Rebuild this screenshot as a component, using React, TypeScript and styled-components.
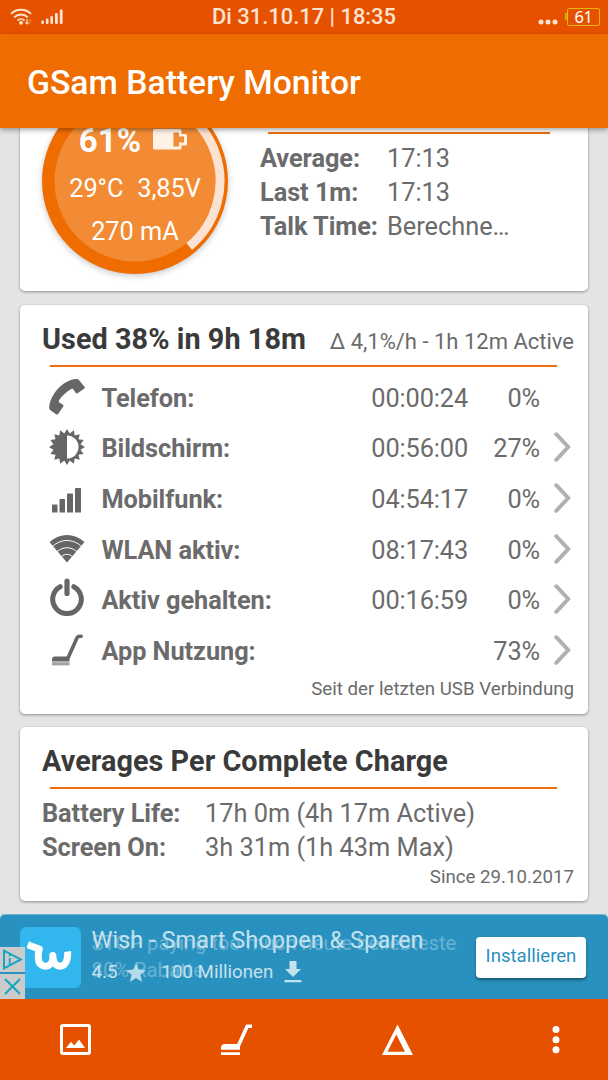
import React from "react";
import styled, { createGlobalStyle } from "styled-components";

const orange = "#ef6c00";
const deepOrange = "#e65100";
const grey = "#6b6b6b";

const GlobalStyle = createGlobalStyle`
  * { box-sizing: border-box; }
  body { margin: 0; background: #e4e4e4; font-family: Roboto, sans-serif; }
  svg { display: block; flex: none; }
`;

const Screen = styled.div`
  width: 608px;
  height: 1080px;
  display: flex;
  flex-direction: column;
  overflow: hidden;
  background: #e4e4e4;
  color: ${grey};
  white-space: nowrap;
`;

const StatusBar = styled.header`
  height: 34px;
  flex: none;
  display: grid;
  grid-template-columns: 1fr auto 1fr;
  align-items: center;
  background: ${deepOrange};
  color: #fde3d2;
  padding: 0 8px;
`;

const StatusGroup = styled.div<{ $end?: boolean }>`
  display: flex;
  align-items: center;
  justify-content: ${(p) => (p.$end ? "flex-end" : "flex-start")};
  gap: ${(p) => (p.$end ? "7px" : "9px")};
  padding-left: 2px;
  padding-bottom: 1px;
`;

const Clock = styled.div`
  font-size: 21.9px;
  font-weight: 500;
  line-height: 34px;
`;

const AppBar = styled.div`
  height: 94px;
  flex: none;
  display: flex;
  align-items: center;
  padding: 2px 27px 0;
  background: ${orange};
  color: #fff;
  font-size: 33.7px;
  font-weight: 500;
  box-shadow: 0 2px 5px rgba(0, 0, 0, 0.35);
  z-index: 1;
`;

const Content = styled.main`
  flex: 1;
  min-height: 0;
  overflow: hidden;
  display: flex;
  flex-direction: column;
  justify-content: flex-end;
  gap: 13px;
  padding: 0 20px 13px;
`;

const Card = styled.section<{ $height: number }>`
  height: ${(p) => p.$height}px;
  flex: none;
  background: #fff;
  border-radius: 5px;
  box-shadow: 0 1px 3px rgba(0, 0, 0, 0.38);
  padding: 0 14px 0 22px;
  &:first-child { margin-bottom: 1px; }
`;

const Summary = styled.div`
  display: flex;
  height: 100%;
  padding-top: 25px;
`;

const Gauge = styled.div`
  width: 186px;
  height: 186px;
  flex: none;
  border-radius: 50%;
  background: ${orange};
  box-shadow: 0 2px 6px rgba(0, 0, 0, 0.22);
  display: grid;
  > * { grid-area: 1 / 1; }
`;

const GaugeText = styled.div`
  display: flex;
  flex-direction: column;
  align-items: center;
  color: #fff;
  font-size: 25.33px;
  line-height: 43px;
  padding-top: 35px;
`;

const GaugeLevel = styled.div`
  display: flex;
  align-items: center;
  font-size: 33px;
  font-weight: 700;
  line-height: 34px;
  gap: 12px;
  height: 36px;
  margin-bottom: 8px;
  padding-right: 4px;
  svg { margin-bottom: 3px; }
`;

const GaugeReadings = styled.div`
  display: flex;
  gap: 14px;
  letter-spacing: -0.1px;
`;

const Estimates = styled.div`
  margin-left: 32px;
  padding-top: 44px;
`;

const Rule = styled.hr<{ $width: number }>`
  width: ${(p) => p.$width}px;
  height: 2px;
  border: 0;
  margin: 0 0 0 8px;
  background: #ef6c0f;
`;

const Fact = styled.div<{ $label: number }>`
  display: grid;
  grid-template-columns: ${(p) => p.$label}px auto;
  font-size: 25.33px;
  line-height: 34.4px;
  b { font-weight: 700; letter-spacing: -0.05px; }
`;

const FactList = styled.div`
  padding-top: 7.6px;
`;

const CardHead = styled.div`
  display: flex;
  align-items: baseline;
  justify-content: space-between;
  height: 60px;
  line-height: 68px;
`;

const Heading = styled.h2`
  margin: 0;
  color: #3a3a3a;
  font-size: 28.8px;
  font-weight: 700;
  letter-spacing: 0.06px;
`;

const HeadNote = styled.span`
  font-size: 22px;
`;

const UsageList = styled.div`
  padding-top: 6px;
`;

const UsageRow = styled.div`
  display: grid;
  grid-template-columns: 59.4px 1fr 110px 72px 34px;
  align-items: center;
  height: 50.65px;
  font-size: 25.33px;
`;

const IconCell = styled.div<{ $lift: number }>`
  width: 50px;
  display: flex;
  justify-content: center;
  padding-bottom: ${(p) => p.$lift * 2}px;
`;

const Label = styled.b`
  font-weight: 700;
  letter-spacing: -0.05px;
`;

const Amount = styled.span`
  text-align: right;
  letter-spacing: -0.13px;
`;

const ChevronCell = styled.span`
  display: flex;
  justify-content: flex-end;
  padding: 0 3px 3px 0;
`;

const Footnote = styled.div`
  text-align: right;
  font-size: 18.7px;
  line-height: 24px;
`;

const Ad = styled.aside`
  height: 85px;
  flex: none;
  display: flex;
  align-items: center;
  position: relative;
  background: #2991bf;
  border-radius: 5px 5px 0 0;
  border-top: 1px solid #68b2d2;
  padding: 0 22px 0 20px;
`;

const AdLogo = styled.div`
  width: 61px;
  height: 61px;
  border-radius: 6px;
  background: #31b6ee;
  display: grid;
  place-items: center;
`;

const AdCopy = styled.div`
  flex: 1;
  height: 100%;
  display: grid;
  margin-left: 10.5px;
  > * { grid-area: 1 / 1; }
`;

const AdSlogan = styled.div`
  color: #69b2d2;
  font-size: 20.25px;
  line-height: 27px;
  padding-top: 15px;
`;

const AdMain = styled.div`
  color: #c3e1ee;
  font-size: 23.6px;
  line-height: 30px;
  padding-top: 10px;
`;

const AdStats = styled.div`
  display: flex;
  align-items: center;
  font-size: 18.7px;
  height: 34px;
`;

const Rating = styled.span`
  margin-right: 9px;
`;

const Downloads = styled.span`
  margin: 0 11px 0 15px;
`;

const InstallButton = styled.button`
  width: 110px;
  height: 41px;
  border: 0;
  border-radius: 4px;
  padding: 0 0 3px;
  background: #fff;
  color: #2991bf;
  font: 18.6px Roboto, sans-serif;
  box-shadow: 0 2px 3px rgba(0, 0, 0, 0.4);
`;

const AdBadges = styled.div`
  position: absolute;
  left: 0;
  bottom: 0;
  display: flex;
  flex-direction: column;
  gap: 2px;
  background: #2991bf;
`;

const AdBadge = styled.div`
  width: 25px;
  height: 25px;
  background: #cbcbcb;
  display: grid;
  place-items: center;
`;

const NavBar = styled.nav`
  height: 81px;
  flex: none;
  display: flex;
  align-items: center;
  gap: 129.5px;
  background: ${deepOrange};
  padding: 0 48px 0 60px;
  > :last-child { margin-left: auto; }
`;

const StatusWifi = () => (
  <svg width="22" height="17" viewBox="0 0 22 17" fill="none" stroke="#fde3d2" strokeWidth="1.9">
    <path d="M1 5.8C6.5.3 15.5.3 21 5.8M4.2 9.4C8.1 5.5 13.9 5.5 17.8 9.4M7.5 12.6c2-2 5-2 7 0" />
    <circle cx="11" cy="14.8" r="1.9" fill="#fde3d2" stroke="none" />
    <path d="M17 11v5m-1.500-1.700 1.500 1.700 1.500-1.700" strokeWidth="1.1" />
    <path d="M20 16v-5m-1.4 1.5L20 11l1.4 1.5" stroke="#dc8a3a" strokeWidth="1" />
  </svg>
);

const StatusSignal = () => (
  <svg width="23" height="16" viewBox="0 0 23 16" fill="#fde3d2">
    <rect x="0.300" y="11.5" width="2.6" height="3.5" rx="1" />
    <rect x="4.9" y="9.5" width="2.6" height="5.5" rx="1" />
    <rect x="9.4" y="7" width="2.6" height="8" rx="1" />
    <rect x="14" y="4" width="2.8" height="11" rx="1" />
    <rect x="18.8" y="0.500" width="2.8" height="14.500" rx="1" />
  </svg>
);

const StatusDots = () => (
  <svg width="20" height="16" viewBox="0 0 20 16" fill="#fde3d2">
    <circle cx="3" cy="13" r="2.500" />
    <circle cx="10" cy="13" r="2.500" />
    <circle cx="17" cy="13" r="2.500" />
  </svg>
);

const StatusBattery = styled.div`
  display: flex;
  align-items: center;
  &::before {
    content: "";
    width: 2px;
    height: 7px;
    background: #d8a80c;
  }
`;

const StatusBatteryBody = styled.div`
  width: 33px;
  height: 18px;
  border: 1px solid #e2b90a;
  border-radius: 2px;
  text-align: center;
  font: 16.5px/16px "Noto Sans", sans-serif;
  letter-spacing: -0.4px;
  color: #fff;
`;

const GaugeDial = () => (
  <svg width="186" height="186" viewBox="-93 -93 186 186">
    <circle r="80.5" fill="#f28b33" />
    <path d="M0-85A85 85 0 0 1 54.2 65.5" fill="none" stroke="#fce2d0" strokeWidth="9" />
  </svg>
);

const GaugeBattery = () => (
  <svg width="34" height="21" viewBox="0 0 34 21">
    <path d="M1.5 0H27a1.5 1.5 0 0 1 1.5 1.5V5H32a2 2 0 0 1 2 2v8a1.5 1.5 0 0 1-1.5 1.5h-4V19a1.5 1.5 0 0 1-1.5 1.5H1.5A1.5 1.5 0 0 1 0 19V1.5A1.5 1.5 0 0 1 1.5 0Z" fill="#fff1e6" />
    <path d="M20.5 3.5H26v4h5v6h-5v4h-5.5Z" fill="#f28b33" />
  </svg>
);

const PhoneIcon = () => (
  <svg width="36" height="36" viewBox="0 0 36 36" fill="#666">
    <path d="M.2 28.2C1.3 16 13 1.2 27.2.1c1.3-.1 2.1.2 2.9 1.1l5.400 6.500c.5.7.4 1.300-.2 1.800l-6.700 4.700c-.7.5-1.400.3-2-.4l-2.200-3.200c-.5-.8-1.200-1-2-.6C17.500 12.500 12.500 17.500 10 21.500c-.5.8-.2 1.400.5 1.900l3.200 2c.8.5 1.100 1.300.6 2l-5.200 7.500c-.5.7-1.300.9-2 .4l-5.900-4.200c-.8-.7-1.100-1.700-1-2.900Z" />
  </svg>
);

const burst = Array.from({ length: 32 }, (_, i) => {
  const r = i % 2 ? 13.8 : 18;
  const a = (i * Math.PI) / 16;
  return `${(r * Math.sin(a)).toFixed(2)},${(-r * Math.cos(a)).toFixed(2)}`;
}).join(" ");

const BrightnessIcon = () => (
  <svg width="36" height="36" viewBox="-18 -18 36 36">
    <polygon points={burst} fill="#666" />
    <path d="M0-11.5a11.500 11.500 0 0 1 0 23Z" fill="#fff" />
  </svg>
);

const SignalIcon = () => (
  <svg width="32" height="28" viewBox="0 0 32 28" fill="#666">
    <rect x="1" y="18.500" width="5.5" height="8" rx=".6" />
    <rect x="8.5" y="13" width="5.5" height="13.5" rx=".6" />
    <rect x="16" y="7.500" width="6" height="19" rx=".6" />
    <rect x="24" y="2" width="6" height="24.5" rx=".6" />
  </svg>
);

const WifiIcon = () => (
  <svg width="36" height="29" viewBox="0 0 36 29">
    <path d="M.5 8C11-1.5 25-1.5 35.5 8L18 28.5Z" fill="#666" />
    <path d="M3.5 12.500c8.500-8 20.500-8 29 0M8 17.700c6-5.300 14-5.300 20 0M12.500 22.500c3.500-2.900 7.500-2.900 11 0" fill="none" stroke="#fff" strokeWidth="1" />
  </svg>
);

const PowerIcon = () => (
  <svg width="36" height="38" viewBox="0 0 36 38" fill="none" stroke="#666" strokeLinecap="round">
    <path d="M11.2 8.7A14.3 14.3 0 1 0 24.8 8.7" strokeWidth="5" />
    <path d="M18 3v12.5" strokeWidth="5.2" />
  </svg>
);

const BroomIcon = () => (
  <svg width="32" height="32" viewBox="0 0 32 32">
    <path d="M17 24 25.600 4.800Q26.600 2.200 28.500 2.200h1.700" fill="none" stroke="#666" strokeWidth="3.600" strokeLinecap="round" />
    <path d="M1 27.500v-2q0-3 3-3h11.500q3 0 3 3v2Z" fill="#666" />
    <path d="M1 29.800h17.5" stroke="#a2a2a2" strokeWidth="3.2" />
  </svg>
);

const Chevron = () => (
  <svg width="17" height="30" viewBox="0 0 17 30" fill="none" stroke="#b0b0b0" strokeWidth="3.9">
    <path d="m2.200 2.200 12 12.800-12 12.800" strokeLinecap="round" />
  </svg>
);

const WishMark = () => (
  <svg width="48" height="34" viewBox="0 0 48 34" fill="none" stroke="#fff">
    <path d="m.6 4.800 11.700 4.200c-1.400 4-1.200 7-.8 10.500.9 9.500 13.300 8.500 14.300-.7v-3.300c0 13.500 13 14 14.500 2.500.4-3 .6-4.500.3-6.500" strokeWidth="7" strokeLinejoin="round" />
  </svg>
);

const StarIcon = () => (
  <svg width="20" height="19" viewBox="0 0 20 19" fill="#b4dbec">
    <path d="m10 0 2.7 6.600 7.300.6-5.600 4.600L16.200 19 10 15.100 3.800 19l1.800-7.200L0 7.200l7.300-.6Z" />
  </svg>
);

const DownloadIcon = () => (
  <svg width="18" height="22" viewBox="0 0 18 22" fill="#c3e1ee">
    <path d="M5.5 0h7v8H17l-8 8-8-8h4.500ZM.5 19h17v2.300H.5Z" />
  </svg>
);

const AdChoices = () => (
  <svg width="21" height="21" viewBox="0 0 21 21" fill="none" stroke="#15a6c6">
    <path d="M2 1.7 19 10.5 2 19.3Z" strokeWidth="2" />
    <path d="M7.7 9v7M7.7 5.200v2" strokeWidth="1.8" />
  </svg>
);

const CloseIcon = () => (
  <svg width="17" height="17" viewBox="0 0 17 17" stroke="#15a6c6" strokeWidth="2">
    <path d="m1 1 15 15M16 1 1 16" />
  </svg>
);

const NavPicture = () => (
  <svg width="31" height="31" viewBox="0 0 31 31">
    <rect x="1.5" y="1.5" width="28" height="28" rx="1.5" fill="none" stroke="#fff" strokeWidth="3" />
    <path d="m6 24 5-6.300 3.300 3.700 4.700-6 6 8.600Z" fill="#fff" />
  </svg>
);

const NavBroom = () => (
  <svg width="32" height="32" viewBox="0 0 32 32">
    <path d="M16.800 23 26.200 2.200H31" fill="none" stroke="#fff" strokeWidth="3.6" />
    <path d="M0 25.700V24q0-4 4-4h11q4 0 4 4v1.700ZM0 28.200h19V31H0Z" fill="#fff" />
  </svg>
);

const NavDelta = () => (
  <svg width="32" height="32" viewBox="0 0 32 32">
    <path d="M15.500.5 31 31H0ZM14.300 10.500 5.500 27.800H23Z" fill="#fff" fillRule="evenodd" />
  </svg>
);

const NavMore = () => (
  <svg width="8" height="30" viewBox="0 0 8 30" fill="#fff">
    <circle cx="4" cy="4.5" r="3.5" />
    <circle cx="4" cy="14.700" r="3.5" />
    <circle cx="4" cy="24.800" r="3.5" />
  </svg>
);

const usage = [
  { icon: <PhoneIcon />, lift: 1, label: "Telefon:", time: "00:00:24", share: "0%", more: false },
  { icon: <BrightnessIcon />, lift: 2, label: "Bildschirm:", time: "00:56:00", share: "27%", more: true },
  { icon: <SignalIcon />, lift: 0, label: "Mobilfunk:", time: "04:54:17", share: "0%", more: true },
  { icon: <WifiIcon />, lift: 1.5, label: "WLAN aktiv:", time: "08:17:43", share: "0%", more: true },
  { icon: <PowerIcon />, lift: 3.5, label: "Aktiv gehalten:", time: "00:16:59", share: "0%", more: true },
  { icon: <BroomIcon />, lift: 2, label: "App Nutzung:", time: "", share: "73%", more: true },
];

export default function App() {
  return (
    <>
      <GlobalStyle />
      <Screen>
        <StatusBar>
          <StatusGroup>
            <StatusWifi />
            <StatusSignal />
          </StatusGroup>
          <Clock>Di 31.10.17 | 18:35</Clock>
          <StatusGroup $end>
            <StatusDots />
            <StatusBattery>
              <StatusBatteryBody>61</StatusBatteryBody>
            </StatusBattery>
          </StatusGroup>
        </StatusBar>
        <AppBar>GSam Battery Monitor</AppBar>

        <Content>
          <Card $height={228}>
            <Summary>
              <Gauge>
                <GaugeDial />
                <GaugeText>
                  <GaugeLevel>
                    61% <GaugeBattery />
                  </GaugeLevel>
                  <GaugeReadings>
                    <span>29°C</span>
                    <span>3,85V</span>
                  </GaugeReadings>
                  <span>270 mA</span>
                </GaugeText>
              </Gauge>
              <Estimates>
                <Rule $width={282} />
                <FactList>
                  <Fact $label={127}><b>Average:</b><span>17:13</span></Fact>
                  <Fact $label={127}><b>Last 1m:</b><span>17:13</span></Fact>
                  <Fact $label={127}><b>Talk Time:</b><span>Berechne…</span></Fact>
                </FactList>
              </Estimates>
            </Summary>
          </Card>

          <Card $height={409}>
            <CardHead>
              <Heading>Used 38% in 9h 18m</Heading>
              <HeadNote>Δ 4,1%/h - 1h 12m Active</HeadNote>
            </CardHead>
            <Rule $width={507} />
            <UsageList>
              {usage.map((row) => (
                <UsageRow key={row.label}>
                  <IconCell $lift={row.lift}>{row.icon}</IconCell>
                  <Label>{row.label}</Label>
                  <Amount>{row.time}</Amount>
                  <Amount>{row.share}</Amount>
                  <ChevronCell>{row.more && <Chevron />}</ChevronCell>
                </UsageRow>
              ))}
            </UsageList>
            <Footnote>Seit der letzten USB Verbindung</Footnote>
          </Card>

          <Card $height={174}>
            <CardHead>
              <Heading>Averages Per Complete Charge</Heading>
            </CardHead>
            <Rule $width={507} />
            <FactList>
              <Fact $label={163}><b>Battery Life:</b><span>17h 0m (4h 17m Active)</span></Fact>
              <Fact $label={163}><b>Screen On:</b><span>3h 31m (1h 43m Max)</span></Fact>
            </FactList>
            <Footnote>Since 29.10.2017</Footnote>
          </Card>
        </Content>

        <Ad>
          <AdLogo><WishMark /></AdLogo>
          <AdCopy>
            <AdSlogan>
              STOP paying too much heute beliebteste
              <br />
              80% Rabatte
            </AdSlogan>
            <AdMain>
              Wish - Smart Shoppen &amp; Sparen
              <AdStats>
                <Rating>4.5</Rating>
                <StarIcon />
                <Downloads>100 Millionen</Downloads>
                <DownloadIcon />
              </AdStats>
            </AdMain>
          </AdCopy>
          <InstallButton>Installieren</InstallButton>
          <AdBadges>
            <AdBadge><AdChoices /></AdBadge>
            <AdBadge><CloseIcon /></AdBadge>
          </AdBadges>
        </Ad>

        <NavBar>
          <NavPicture />
          <NavBroom />
          <NavDelta />
          <NavMore />
        </NavBar>
      </Screen>
    </>
  );
}
